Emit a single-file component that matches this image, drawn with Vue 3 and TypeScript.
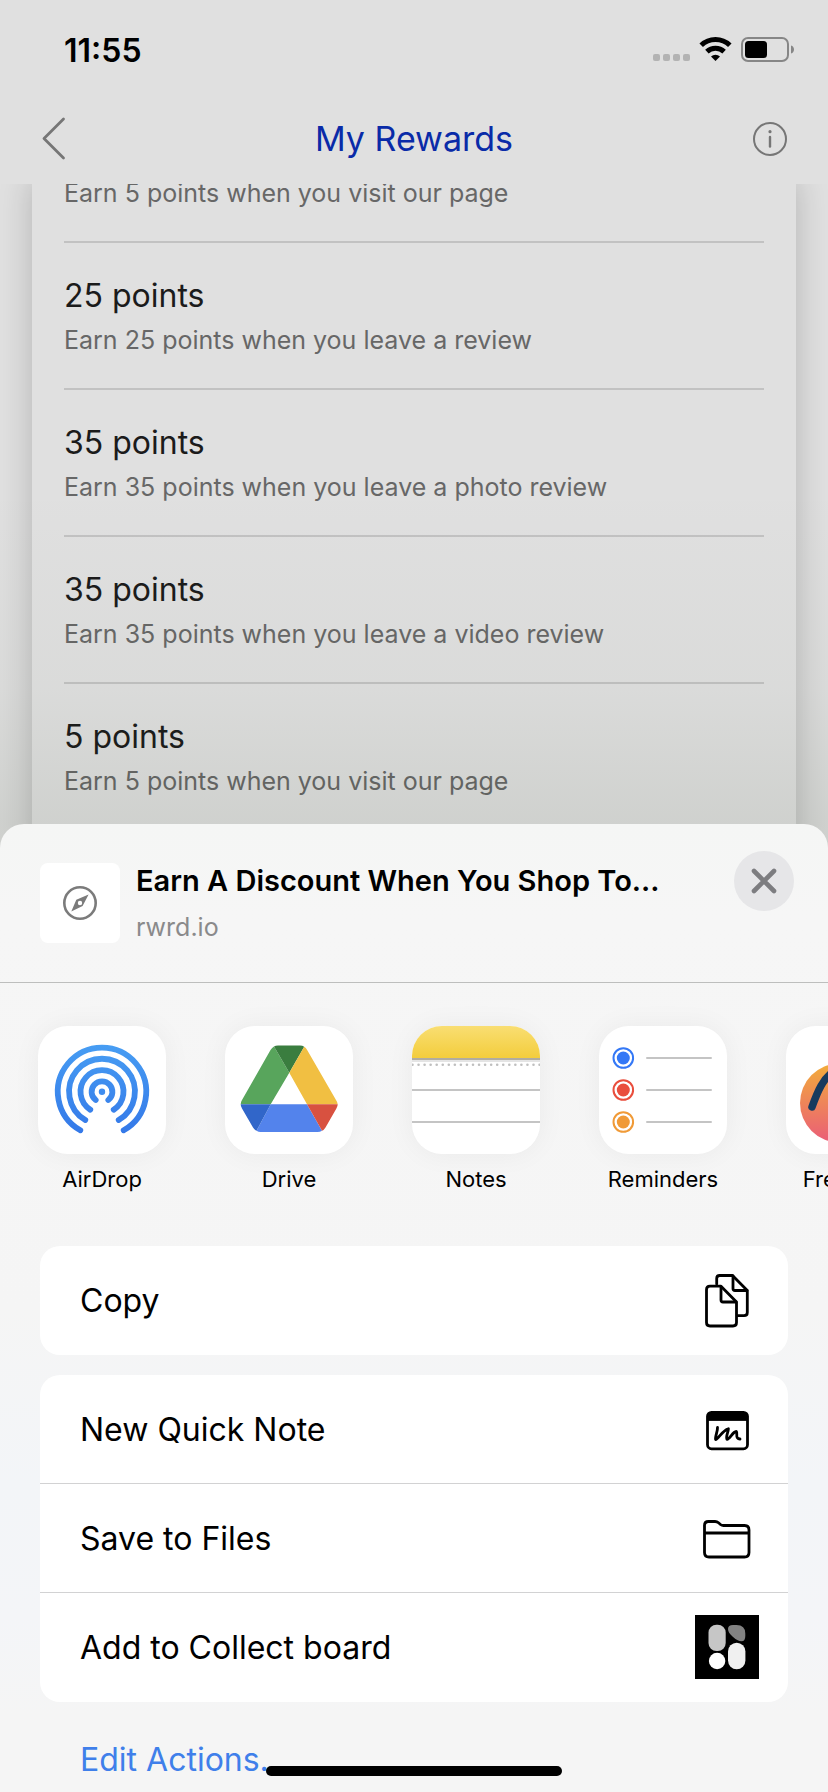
<script setup lang="ts">
import { ref } from 'vue'

interface Reward {
  points: string
  text: string
}

interface ShareApp {
  id: string
  name: string
}

const scrolledReward = 'Earn 5 points when you visit our page'

const rewards = ref<Reward[]>([
  { points: '25 points', text: 'Earn 25 points when you leave a review' },
  { points: '35 points', text: 'Earn 35 points when you leave a photo review' },
  { points: '35 points', text: 'Earn 35 points when you leave a video review' },
  { points: '5 points', text: 'Earn 5 points when you visit our page' },
])

const apps: ShareApp[] = [
  { id: 'airdrop', name: 'AirDrop' },
  { id: 'drive', name: 'Drive' },
  { id: 'notes', name: 'Notes' },
  { id: 'reminders', name: 'Reminders' },
  { id: 'freeform', name: 'Freeform' },
]

const reminderRows = [
  { y: 32, color: '#3478f6' },
  { y: 64, color: '#e94e3d' },
  { y: 96, color: '#f09a37' },
]

const actionGroups: { id: string; label: string }[][] = [
  [{ id: 'copy', label: 'Copy' }],
  [
    { id: 'note', label: 'New Quick Note' },
    { id: 'files', label: 'Save to Files' },
    { id: 'collect', label: 'Add to Collect board' },
  ],
]
</script>

<template>
  <div class="screen">
    <header class="top">
      <div class="status">
        <span class="time">11:55</span>
        <svg class="indicators" width="144" height="28" viewBox="0 0 144 28" aria-hidden="true">
          <g fill="#b3b3b3">
            <rect x="3" y="18" width="7" height="7" rx="2" />
            <rect x="13" y="18" width="7" height="7" rx="2" />
            <rect x="23" y="18" width="7" height="7" rx="2" />
            <rect x="33" y="18" width="7" height="7" rx="2" />
          </g>
          <g fill="none" stroke="#000" stroke-width="5">
            <path d="M51.200 9.200a20.500 20.500 0 0 1 28.600 0" />
            <path d="M56.900 15.600a12.400 12.400 0 0 1 17.200 0" />
          </g>
          <path d="M61 20.400a6.800 6.800 0 0 1 9 0L65.500 25z" />
          <rect x="92" y="2" width="46" height="23" rx="6" fill="none" stroke="#868686" stroke-width="2" />
          <rect x="95" y="5" width="22" height="17" rx="3.500" />
          <path d="M141 9.500c4 1 4 7 0 8z" fill="#868686" />
        </svg>
      </div>
      <nav class="nav">
        <button class="nav-button" type="button" aria-label="Back">
          <svg width="44" height="44" viewBox="0 0 44 44"><path d="M27.500 2 8 21.500 27.500 41" fill="none" stroke="#767676" stroke-width="2.800" stroke-linecap="round" stroke-linejoin="round" /></svg>
        </button>
        <h1>My Rewards</h1>
        <button class="nav-button" type="button" aria-label="Information">
          <svg width="44" height="44" viewBox="0 0 44 44">
            <circle cx="22" cy="22" r="16" fill="none" stroke="#767676" stroke-width="2" />
            <circle cx="22" cy="14.700" r="1.600" fill="#767676" />
            <path d="M22 20v9.500" stroke="#767676" stroke-width="2.400" stroke-linecap="round" />
          </svg>
        </button>
      </nav>
    </header>

    <main class="rewards">
      <ul class="card">
        <li class="scrolled"><p>{{ scrolledReward }}</p></li>
        <li v-for="(reward, i) in rewards" :key="i">
          <h2>{{ reward.points }}</h2>
          <p>{{ reward.text }}</p>
        </li>
      </ul>
    </main>

    <section class="sheet" aria-label="Share">
      <div class="sheet-head">
        <div class="thumb">
          <svg width="36" height="36" viewBox="0 0 36 36" aria-hidden="true">
            <circle cx="18" cy="18" r="15.700" fill="none" stroke="#7b7b7b" stroke-width="2.600" />
            <path fill="#7b7b7b" fill-rule="evenodd" d="M26.600 9.400 20.600 21 9.300 26.600 14.300 14.700ZM18 15.800a2.200 2.200 0 1 0 0 4.400a2.200 2.200 0 0 0 0-4.400Z" />
          </svg>
        </div>
        <div class="link">
          <strong>Earn A Discount When You Shop To...</strong>
          <span>rwrd.io</span>
        </div>
        <button class="close" type="button" aria-label="Close">
          <svg width="28" height="28" viewBox="0 0 28 28"><path d="M4 4 24 24M24 4 4 24" stroke="#7d7d80" stroke-width="4.600" stroke-linecap="round" /></svg>
        </button>
      </div>

      <div class="apps">
        <button v-for="app in apps" :key="app.id" class="app" type="button">
          <span class="tile">
            <svg v-if="app.id === 'airdrop'" viewBox="0 0 128 128">
              <defs>
                <linearGradient id="air" gradientUnits="userSpaceOnUse" x1="0" y1="19" x2="0" y2="108">
                  <stop offset="0" stop-color="#479df3" /><stop offset="1" stop-color="#3478e8" />
                </linearGradient>
              </defs>
              <g fill="none" stroke="url(#air)" stroke-width="5.800" stroke-linecap="round">
                <path d="M42.300 104.300A44.200 44.200 0 1 1 85.700 104.300" />
                <path d="M47.300 94A32.900 32.900 0 1 1 80.700 94" />
                <path d="M52.300 83.700A21.500 21.500 0 1 1 75.700 83.700" />
                <path d="M57.700 74A10.400 10.400 0 1 1 70.300 74" />
              </g>
              <circle cx="64" cy="65.700" r="3.200" fill="#3f8df0" />
            </svg>
            <svg v-else-if="app.id === 'drive'" viewBox="0 0 128 128">
              <path fill="#58a55c" d="M15.700 78.300Q15.700 76 17 74L45.500 24Q47 21.500 49 20.500L64.300 46.700 45.700 78.300Z" />
              <path fill="#3a7d3f" d="M49 20.500Q50.500 19.600 53 19.600H75Q77.500 19.600 79.200 20.800L64.300 46.700Z" />
              <path fill="#f1bf42" d="M79.200 20.800Q81 22 82 23.800L111 74Q112.700 76.500 112.700 78.300H82L64.300 46.700Z" />
              <path fill="#5383ec" d="M45.700 78.300H82L97 104.800Q95 106 92.500 106H35.500Q33.500 106 31.500 104.800Z" />
              <path fill="#3166c9" d="M15.700 78.300H45.700L31.500 104.800Q29.500 103.800 28 101.500L17 82.500Q15.700 80.500 15.700 78.300Z" />
              <path fill="#d85140" d="M82 78.300H112.700Q112.700 80.500 111.400 82.500L100.500 101.500Q99 104 97 104.800Z" />
            </svg>
            <svg v-else-if="app.id === 'notes'" viewBox="0 0 128 128">
              <defs>
                <linearGradient id="note" x1="0" y1="0" x2="0" y2="1">
                  <stop offset="0" stop-color="#f9de72" /><stop offset="1" stop-color="#f3cd3c" />
                </linearGradient>
              </defs>
              <rect width="128" height="32" fill="url(#note)" />
              <path d="M0 33h128" stroke="#b0aca0" stroke-width="2" />
              <path d="M0 35h128" stroke="#e4e4e4" stroke-width="2" />
              <path d="M.5 38.700H128" stroke="#bfbfbf" stroke-width="2.600" stroke-linecap="round" stroke-dasharray="0 6.050" />
              <path d="M0 64h128M0 96h128" stroke="#c4c4c4" stroke-width="2" />
            </svg>
            <svg v-else-if="app.id === 'reminders'" viewBox="0 0 128 128">
              <g v-for="row in reminderRows" :key="row.y">
                <circle cx="24.300" :cy="row.y" r="9.800" fill="none" :stroke="row.color" stroke-width="2" />
                <circle cx="24.300" :cy="row.y" r="6.500" :fill="row.color" />
                <path :d="`M48 ${row.y}H112`" stroke="#c4c4c4" stroke-width="2" stroke-linecap="round" />
              </g>
            </svg>
            <svg v-else viewBox="0 0 128 128">
              <defs>
                <linearGradient id="free" x1="0" y1="0" x2="0" y2="1">
                  <stop offset="0" stop-color="#f2ac3a" /><stop offset="1" stop-color="#ea5d78" />
                </linearGradient>
              </defs>
              <circle cx="53.500" cy="77" r="39.500" fill="url(#free)" />
              <path d="M26 81C31 67 37 51 50 44S72 60 78 78 96 88 104 72" fill="none" stroke="#173a5e" stroke-width="7.500" stroke-linecap="round" />
            </svg>
          </span>
          <span class="app-name">{{ app.name }}</span>
        </button>
      </div>

      <div class="actions">
        <div v-for="(group, g) in actionGroups" :key="g" class="group">
          <button v-for="action in group" :key="action.id" class="action" type="button">
            <span>{{ action.label }}</span>
            <svg v-if="action.id === 'copy'" class="icon" viewBox="0 0 64 64">
              <path d="M21.700 16V10.500Q21.700 7.500 24.700 7.500H37.500L52.300 22.500V44.500Q52.300 47.700 49 47.700H43" />
              <path d="M38 8V20.500Q38 22.500 40 22.500H52" />
              <path d="M15 18.200H26L41.500 34V54.500Q41.500 58 38 58H15Q11.500 58 11.500 54.500V21.700Q11.500 18.200 15 18.200Z" />
              <path d="M26 19V32Q26 34 28 34H41" />
            </svg>
            <svg v-else-if="action.id === 'note'" class="icon" viewBox="0 0 64 64">
              <rect x="12.500" y="15.300" width="40" height="36.500" rx="4" />
              <path d="M12.500 23V19Q12.500 15.300 16.500 15.300H48.500Q52.500 15.300 52.500 19V23Z" fill="#000" stroke-width="1" />
              <path d="M22.500 30.500C22.800 34 20 39.500 20.600 42.600C24 41.500 27 33.500 33.400 31.800C33.300 35.500 30.500 39 32 42.300C35 41.800 37.500 35 41.300 34.500C43 36.500 39.500 41.500 45 42" />
            </svg>
            <svg v-else-if="action.id === 'files'" class="icon" viewBox="0 0 64 64">
              <path d="M9.500 27V19.500Q9.500 15.500 13.500 15.500H20Q22 15.500 23.500 16.800L25.500 18.500Q26.800 19.500 28.500 19.500H49.500Q54 19.500 54 24V46.500Q54 51 49.500 51H14Q9.500 51 9.500 46.500ZM9.500 27H54" />
            </svg>
            <svg v-else class="icon" viewBox="0 0 64 64">
              <path d="M0 0H64V64H0Z" fill="#000" stroke="none" />
              <rect x="13.500" y="9.700" width="17.200" height="26.300" rx="8" fill="#c6c6c6" stroke="none" />
              <path d="M41.500 10Q50.300 10 50.300 18.500V21Q50.300 26.300 46.500 26.300 42.500 26.300 37.500 21.500 33 17.500 33 14 33 10 38 10Z" fill="#828282" stroke="none" />
              <circle cx="22.100" cy="46" r="8.200" fill="#fff" stroke="none" />
              <rect x="33" y="27.700" width="17.400" height="26.500" rx="8.700" fill="#f0f0f0" stroke="none" />
            </svg>
          </button>
        </div>
      </div>
      <a class="edit" href="#">Edit Actions...</a>
      <div class="home-bar"></div>
    </section>
  </div>
</template>

<style>
body {
  background: #f5f5f6;
}
</style>

<style scoped>
.screen {
  display: flex;
  flex-direction: column;
  min-height: 100vh;
  overflow: hidden;
  background: #e0e0e0;
  font-family: Inter, "Liberation Sans", sans-serif;
  color: #000;
}
h1, h2, p, ul {
  margin: 0;
  padding: 0;
  font-weight: 400;
}
button {
  margin: 0;
  padding: 0;
  border: 0;
  background: none;
  font: inherit;
  color: inherit;
}
svg {
  display: block;
}
.top {
  position: relative;
  z-index: 1;
  background: #e0e0e0;
}
.status {
  display: flex;
  align-items: center;
  justify-content: space-between;
  height: 100px;
  padding: 0 34px 0 64px;
}
.time {
  font-size: 32px;
  font-weight: 600;
}
.nav {
  display: flex;
  align-items: center;
  justify-content: space-between;
  height: 78px;
  padding: 0 36px 6px;
}
h1 {
  font-size: 34px;
  line-height: 40px;
  color: #0a2ba8;
}
.rewards {
  position: relative;
  padding: 0 32px;
}
.rewards::after {
  content: "";
  position: absolute;
  inset: 0 0 -32px;
  background: linear-gradient(rgba(40, 60, 30, 0) 45%, rgba(40, 60, 30, 0.03) 75%, rgba(40, 60, 30, 0.09) 95%);
  pointer-events: none;
}
.card {
  margin-bottom: -32px;
  padding: 0 32px 32px;
  list-style: none;
  background: #e0e0e0;
  box-shadow: 0 0 32px rgba(0, 0, 0, 0.2);
}
.card li {
  padding: 33px 0;
  border-bottom: 2px solid #c2c2c2;
}
.card .scrolled {
  margin-top: -6px;
  padding-top: 0;
}
.card li:last-child {
  padding-bottom: 28px;
  border-bottom: 0;
}
h2 {
  margin-bottom: 9px;
  font-size: 32px;
  line-height: 40px;
  color: #1b1b1b;
}
.card p {
  font-size: 25px;
  line-height: 30px;
  color: #676767;
}
.sheet {
  position: relative;
  z-index: 2;
  flex: 1;
  border-radius: 24px 24px 0 0;
  background: linear-gradient(#f5f6f5, #f6f6f6 10%, #f5f5f5 50%, #f3f5f8 68%, #f4f5f8 82%, #f5f5f5 92%);
}
.sheet-head {
  display: flex;
  align-items: flex-start;
  padding: 27px 34px 39px 40px;
  border-bottom: 1px solid #bdbebd;
}
.thumb {
  display: grid;
  place-items: center;
  flex: none;
  width: 80px;
  height: 80px;
  margin-top: 12px;
  border-radius: 8px;
  background: #fff;
}
.link {
  display: flex;
  flex: 1;
  flex-direction: column;
  gap: 13px;
  min-width: 0;
  margin: 12px 16px 0;
}
.link strong {
  overflow: hidden;
  font-size: 29px;
  font-weight: 600;
  line-height: 36px;
  white-space: nowrap;
}
.link span {
  font-size: 25px;
  line-height: 30px;
  color: #8a8a8b;
}
.close {
  display: grid;
  place-items: center;
  flex: none;
  width: 60px;
  height: 60px;
  border-radius: 50%;
  background: #e6e6e8;
}
.apps {
  display: flex;
  gap: 59px;
  overflow: hidden;
  padding: 43px 0 53px 38px;
}
.app {
  display: flex;
  flex: none;
  flex-direction: column;
  align-items: center;
  gap: 11px;
  width: 128px;
}
.tile {
  width: 128px;
  height: 128px;
  border-radius: 30px;
  background: #fff;
  box-shadow: 0 0 28px rgba(0, 0, 0, 0.05);
}
.tile svg {
  width: 128px;
  height: 128px;
  border-radius: 30px;
}
.app-name {
  font-size: 22px;
  line-height: 28px;
}
.actions {
  display: flex;
  flex-direction: column;
  gap: 20px;
  padding: 0 40px;
}
.group {
  overflow: hidden;
  padding-bottom: 1px;
  border-radius: 20px;
  background: #fff;
}
.action {
  display: flex;
  align-items: center;
  justify-content: space-between;
  width: 100%;
  height: 108px;
  padding: 0 29px 0 40px;
  font-size: 32px;
  line-height: 44px;
}
.action span {
  padding-top: 2px;
}
.action + .action {
  height: 109px;
  border-top: 1px solid #d2d2d3;
}
.icon {
  width: 64px;
  height: 64px;
  fill: none;
  stroke: #000;
  stroke-width: 2.8px;
  stroke-linecap: round;
  stroke-linejoin: round;
}
.edit {
  display: block;
  margin: 36px 80px 10px;
  font-size: 32px;
  line-height: 44px;
  color: #3f7fea;
  text-decoration: none;
}
.home-bar {
  position: absolute;
  bottom: 16px;
  left: 50%;
  width: 296px;
  height: 10px;
  margin-left: -148px;
  border-radius: 5px;
  background: #000;
}
</style>
